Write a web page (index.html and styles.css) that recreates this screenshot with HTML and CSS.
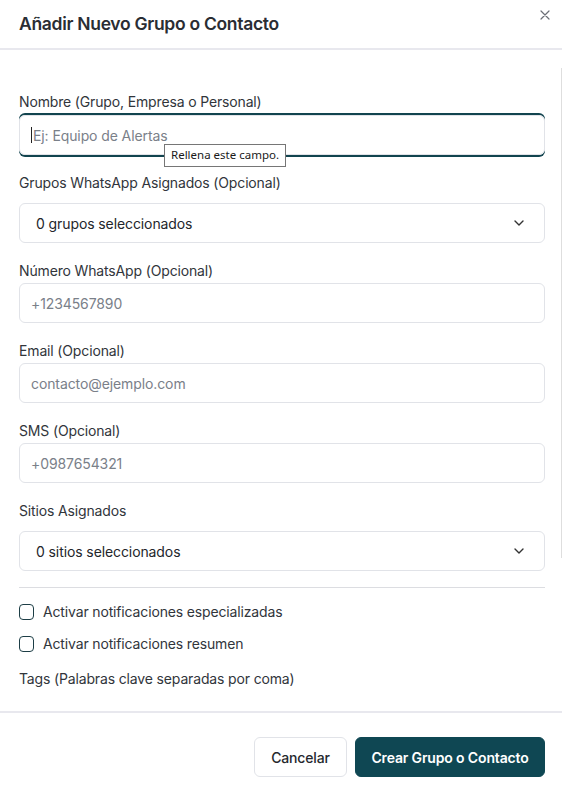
FILE: index.html
```html
<!DOCTYPE html>
<html lang="es">
<head>
<meta charset="utf-8">
<title>Añadir Nuevo Grupo o Contacto</title>
<link rel="stylesheet" href="styles.css">
</head>
<body>
<div class="modal">
  <header class="modal-header">
    <h2 class="modal-title">Añadir Nuevo Grupo o Contacto</h2>
    <button class="close-btn" aria-label="Cerrar">
      <svg width="10" height="10" viewBox="0 0 10 10"><path d="M1 1L9 9M9 1L1 9" stroke="#6b6f76" stroke-width="1.2" stroke-linecap="round"/></svg>
    </button>
  </header>
  <div class="modal-body">
    <div class="scroll-line"></div>
    <div class="field">
      <label class="label">Nombre (Grupo, Empresa o Personal)</label>
      <div class="input-wrap">
        <div class="input focused"><span class="caret"></span><span class="placeholder">Ej: Equipo de Alertas</span></div>
        <div class="tooltip">Rellena este campo.</div>
      </div>
    </div>
    <div class="field">
      <label class="label">Grupos WhatsApp Asignados (Opcional)</label>
      <div class="select spaced"><span>0 grupos seleccionados</span>
        <svg class="chev" width="10" height="6" viewBox="0 0 10 6"><path d="M1 1L5 5L9 1" fill="none" stroke="#333" stroke-width="1.4" stroke-linecap="round" stroke-linejoin="round"/></svg>
      </div>
    </div>
    <div class="field">
      <label class="label">Número WhatsApp (Opcional)</label>
      <div class="input"><span class="placeholder">+1234567890</span></div>
    </div>
    <div class="field">
      <label class="label">Email (Opcional)</label>
      <div class="input"><span class="placeholder">contacto@ejemplo.com</span></div>
    </div>
    <div class="field">
      <label class="label">SMS (Opcional)</label>
      <div class="input"><span class="placeholder">+0987654321</span></div>
    </div>
    <div class="field field-last">
      <label class="label">Sitios Asignados</label>
      <div class="select spaced"><span>0 sitios seleccionados</span>
        <svg class="chev" width="10" height="6" viewBox="0 0 10 6"><path d="M1 1L5 5L9 1" fill="none" stroke="#333" stroke-width="1.4" stroke-linecap="round" stroke-linejoin="round"/></svg>
      </div>
    </div>
    <hr class="divider">
    <div class="check-row"><span class="checkbox"></span><span>Activar notificaciones especializadas</span></div>
    <div class="check-row"><span class="checkbox"></span><span>Activar notificaciones resumen</span></div>
    <div class="label tags">Tags (Palabras clave separadas por coma)</div>
  </div>
  <footer class="modal-footer">
    <button class="btn btn-outline">Cancelar</button>
    <button class="btn btn-primary">Crear Grupo o Contacto</button>
  </footer>
</div>
</body>
</html>
```

FILE: styles.css
```css
* { box-sizing: border-box; }
html, body { margin: 0; padding: 0; background: #fff; }
body { font-family: Inter, "Noto Sans", sans-serif; color: #262a30; }
.modal { width: 562px; height: 794px; display: flex; flex-direction: column; background: #fff; }
.modal-header { height: 50px; border-bottom: 2px solid #e8e8ee; display: flex; align-items: center; justify-content: space-between; padding: 0 12px 0 19px; position: relative; }
.modal-title { margin: 0; font-size: 17.5px; font-weight: 600; color: #2a2d33; letter-spacing: -0.3px; position: relative; top: -1px; }
.close-btn { position: absolute; right: 12px; top: 10px; border: 0; background: none; padding: 0; width: 10px; height: 10px; display: flex; }
.modal-body { height: 661px; overflow: hidden; padding: 42px 17px 0 19px; position: relative; }
.scroll-line { position: absolute; right: 0; top: 18px; width: 1px; height: 490px; background: #dedede; }
.field { margin-bottom: 18px; }
.field-last { margin-bottom: 0; }
.label { display: block; font-size: 14px; line-height: 20px; color: #31353b; margin-bottom: 2px; letter-spacing: -0.15px; }
.input-wrap { position: relative; }
.input, .select { height: 40px; border: 1px solid #e1e3e8; border-radius: 6px; display: flex; align-items: center; font-size: 14px; letter-spacing: -0.1px; }
.input { padding-left: 11px; }
.input.focused { margin-top: 3px; box-shadow: 0 -2px 0 0 #12444f, 0 2px 0 0 #12444f; }
.placeholder { color: #7a8089; }
.caret { width: 1px; height: 16px; background: #222; margin-right: 1px; }
.select { justify-content: space-between; padding: 0 20px 0 16px; color: #23262b; }
.select.spaced { margin-top: 10px; }
.chev { display: block; }
.tooltip { position: absolute; left: 145px; top: 29px; border: 1px solid #767676; background: #fff; font-family: "Noto Sans", "Open Sans", sans-serif; font-size: 11.5px; color: #1a1a1a; padding: 2px 6px 3px; line-height: 16px; }
.divider { border: 0; border-top: 1px solid #dcdde1; margin: 16px 0 14px; }
.check-row { display: flex; align-items: center; gap: 9px; font-size: 14px; line-height: 20px; color: #31353b; margin-bottom: 12px; letter-spacing: -0.15px; }
.checkbox { width: 15px; height: 16px; border: 1.5px solid #1d3e46; border-radius: 4px; display: inline-block; flex: none; }
.tags { margin-top: 15px; }
.modal-footer { height: 83px; border-top: 2px solid #e8e8ee; display: flex; justify-content: flex-end; align-items: flex-start; gap: 8px; padding: 24px 17px 0 0; }
.btn { height: 40px; border-radius: 6px; font-family: Inter, "Noto Sans", sans-serif; font-size: 14px; font-weight: 500; padding: 0; cursor: pointer; white-space: nowrap; letter-spacing: -0.15px; }
.btn-outline { background: #fff; border: 1px solid #e1e3e8; color: #25282d; width: 93px; }
.btn-primary { background: #0f4753; border: 1px solid #0f4753; color: #fff; width: 190px; font-weight: 600; }
```
